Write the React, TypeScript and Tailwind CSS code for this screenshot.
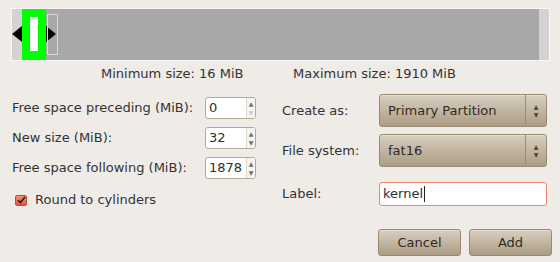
import React from 'react';

function SpinBox({ value, downDisabled }: { value: string; downDisabled?: boolean }) {
  return (
    <div className="flex h-[22px] w-[51px] overflow-hidden rounded-[3px] border border-[#b5a994] bg-white">
      <div className="flex flex-1 items-center pl-[3px] text-[#2e2e2e]">{value}</div>
      <div className="flex w-[9px] flex-col items-center justify-center gap-[3px] border-l border-[#ddd7cf] bg-[#f7f5f2] text-[6px] leading-none">
        <span className="text-[#6e6e6e]">▲</span>
        <span className={downDisabled ? 'text-[#cfcac2]' : 'text-[#6e6e6e]'}>▼</span>
      </div>
    </div>
  );
}

function Combo({ value }: { value: string }) {
  return (
    <div className="flex h-[33px] w-[168px] rounded-[3px] border border-[#998a73] bg-gradient-to-b from-[#d9cfc0] to-[#ab9c84] text-[#2f2a22] shadow-[inset_0_1px_0_#e6ded2]">
      <div className="flex flex-1 items-center pl-[8px]">{value}</div>
      <div className="flex w-[21px] flex-col items-center justify-center gap-[2px] border-l border-[#9a8b74] text-[6px] leading-none text-[#4a4236]">
        <span>▲</span>
        <span>▼</span>
      </div>
    </div>
  );
}

export default function App() {
  return (
    <div
      className="h-[262px] w-[560px] overflow-hidden bg-[#efebe7] text-[13px] leading-[16px] text-[#333333]"
      style={{ fontFamily: '"DejaVu Sans", sans-serif' }}
    >
      {/* Partition bar */}
      <div className="ml-[11px] mt-[8px] h-[53px] w-[539px] border border-[#f9f7f4]">
        <div className="relative flex h-full">
          <div className="w-[10px] bg-[#d3d3d3]" />
          <div className="relative w-[24px] bg-[#00ff00]">
            <div className="absolute left-[8px] top-[8px] h-[34px] w-[8px] bg-white" />
          </div>
          <div className="flex-1 bg-[#a8a8a8]" />
          <div className="w-[10px] bg-[#d3d3d3]" />
          {/* handles */}
          <div className="absolute left-[0px] top-[17px] h-0 w-0 border-y-[8px] border-r-[10px] border-y-transparent border-r-black" />
          <div className="absolute left-[34px] top-[17px] h-0 w-0 border-y-[8px] border-l-[10px] border-y-transparent border-l-black" />
          <div className="absolute left-[35px] top-[5px] h-[41px] w-[11px] border border-[#d8d8d8]" />
        </div>
      </div>

      {/* Size limits */}
      <div className="mt-[5px] flex pl-[101px]">
        <span className="w-[192px]">Minimum size: 16 MiB</span>
        <span>Maximum size: 1910 MiB</span>
      </div>

      {/* Form */}
      <div className="mt-[12px] flex">
        <div className="w-[270px] pl-[12px] pt-[3px]">
          <div className="flex h-[22px] items-center">
            <span className="w-[193px]">Free space preceding (MiB):</span>
            <SpinBox value="0" downDisabled />
          </div>
          <div className="mt-[8px] flex h-[22px] items-center">
            <span className="w-[193px]">New size (MiB):</span>
            <SpinBox value="32" />
          </div>
          <div className="mt-[8px] flex h-[22px] items-center">
            <span className="w-[193px]">Free space following (MiB):</span>
            <SpinBox value="1878" />
          </div>
          <label className="mt-[13px] flex h-[16px] items-center pl-[3px]">
            <span className="flex h-[11px] w-[12px] items-center justify-center rounded-[2px] border border-[#b2523d] bg-gradient-to-b from-[#f48f74] to-[#db5a40]">
              <svg width="9" height="8" viewBox="0 0 9 8">
                <path d="M1 4.2 L3.4 6.6 L8 1" fill="none" stroke="#2b1a14" strokeWidth="1.6" />
              </svg>
            </span>
            <span className="ml-[8px]">Round to cylinders</span>
          </label>
        </div>

        <div className="pl-[12px]">
          <div className="flex items-center">
            <span className="w-[97px]">Create as:</span>
            <Combo value="Primary Partition" />
          </div>
          <div className="mt-[7px] flex items-center">
            <span className="w-[97px]">File system:</span>
            <Combo value="fat16" />
          </div>
          <div className="mt-[15px] flex items-center">
            <span className="w-[97px]">Label:</span>
            <div className="flex h-[24px] w-[168px] items-center rounded-[3px] border border-[#e8876c] bg-white pl-[3px] text-[#2e2e2e]">
              kernel
              <span className="ml-[1px] h-[16px] w-px bg-[#222]" />
            </div>
          </div>
        </div>
      </div>

      {/* Buttons */}
      <div className="mt-[21px] flex justify-end gap-[8px] pr-[8px]">
        <button className="h-[27px] w-[83px] rounded-[3px] border border-[#998a73] bg-gradient-to-b from-[#d9cfc0] to-[#ab9c84] text-[#2f2a22] shadow-[inset_0_1px_0_#e6ded2]">
          Cancel
        </button>
        <button className="h-[27px] w-[83px] rounded-[3px] border border-[#998a73] bg-gradient-to-b from-[#d9cfc0] to-[#ab9c84] text-[#2f2a22] shadow-[inset_0_1px_0_#e6ded2]">
          Add
        </button>
      </div>
    </div>
  );
}
